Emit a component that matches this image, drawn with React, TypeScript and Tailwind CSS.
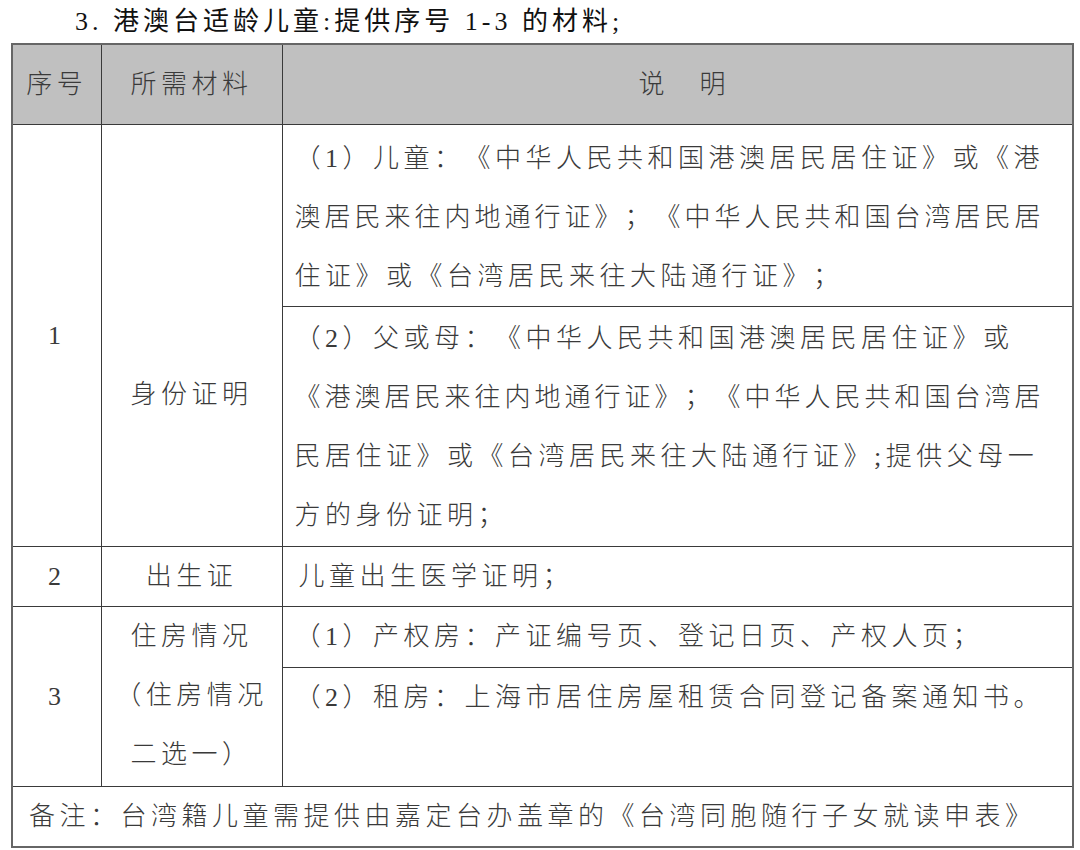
const font = { fontFamily: '"Liberation Serif", "Noto Sans CJK SC", serif' };

const cell = 'border border-[#3a3a3a] p-0';

// lines holding "》；《" are set a little tighter, as in the source document
function Lines({ lines, className = '' }: { lines: string[]; className?: string }) {
  return (
    <div className={className}>
      {lines.map(l => (
        <div
          key={l}
          className={`whitespace-nowrap leading-[59px] ${l.includes('》；《') ? 'tracking-[4px]' : 'tracking-[4.5px]'}`}
        >
          {l}
        </div>
      ))}
    </div>
  );
}

export default function App() {
  return (
    <div
      className="w-[1080px] h-[850px] bg-white text-[26px] tracking-[4.5px] text-[#3a3a3a] font-light [text-spacing-trim:space-all]"
      style={font}
    >
      {/* Title */}
      <div className="h-[43px] pl-[75px] pt-[4px] leading-[36px] text-[#111] tracking-[4px] font-normal">
        3. 港澳台适龄儿童:提供序号 1-3 的材料;
      </div>

      <table className="ml-[11px] w-[1061px] border-collapse table-fixed border-2 border-[#666]">
        <colgroup>
          <col className="w-[89px]" />
          <col className="w-[181px]" />
          <col className="w-[791px]" />
        </colgroup>
        <tbody>
          <tr className="h-[80px] bg-[#c0c0c0]">
            <td className={`${cell} text-center`}>序号</td>
            <td className={`${cell} text-center`}>所需材料</td>
            <td className={`${cell} text-center pl-[14px]`}>说　明</td>
          </tr>

          <tr className="h-[180px]">
            <td rowSpan={2} className={`${cell} text-center align-middle`}>1</td>
            <td rowSpan={2} className={`${cell} text-center align-middle`}>
              <div className="pt-[118px]">身份证明</div>
            </td>
            <td className={`${cell} align-top`}>
              <Lines
                className="pl-[12px] pt-[4px]"
                lines={[
                  '（1）儿童：《中华人民共和国港澳居民居住证》或《港',
                  '澳居民来往内地通行证》；《中华人民共和国台湾居民居',
                  '住证》或《台湾居民来往大陆通行证》；',
                ]}
              />
            </td>
          </tr>
          <tr className="h-[240px]">
            <td className={`${cell} align-top`}>
              <Lines
                className="pl-[12px] pt-[2px]"
                lines={[
                  '（2）父或母：《中华人民共和国港澳居民居住证》或',
                  '《港澳居民来往内地通行证》；《中华人民共和国台湾居',
                  '民居住证》或《台湾居民来往大陆通行证》;提供父母一',
                  '方的身份证明；',
                ]}
              />
            </td>
          </tr>

          <tr className="h-[60px]">
            <td className={`${cell} text-center`}>2</td>
            <td className={`${cell} text-center`}>出生证</td>
            <td className={`${cell} pl-[16px]`}>儿童出生医学证明；</td>
          </tr>

          <tr className="h-[61px]">
            <td rowSpan={2} className={`${cell} text-center align-middle`}>3</td>
            <td rowSpan={2} className={`${cell} text-center align-top`}>
              <Lines lines={['住房情况', '（住房情况', '二选一）']} />
            </td>
            <td className={`${cell} pl-[12px]`}>（1）产权房：产证编号页、登记日页、产权人页；</td>
          </tr>
          <tr className="h-[119px]">
            <td className={`${cell} align-top pl-[12px]`}>
              <div className="leading-[59px]">（2）租房：上海市居住房屋租赁合同登记备案通知书。</div>
            </td>
          </tr>

          <tr className="h-[61px]">
            <td colSpan={3} className={`${cell} pl-[16px] whitespace-nowrap`}>
              备注：台湾籍儿童需提供由嘉定台办盖章的《台湾同胞随行子女就读申表》
            </td>
          </tr>
        </tbody>
      </table>
    </div>
  );
}
